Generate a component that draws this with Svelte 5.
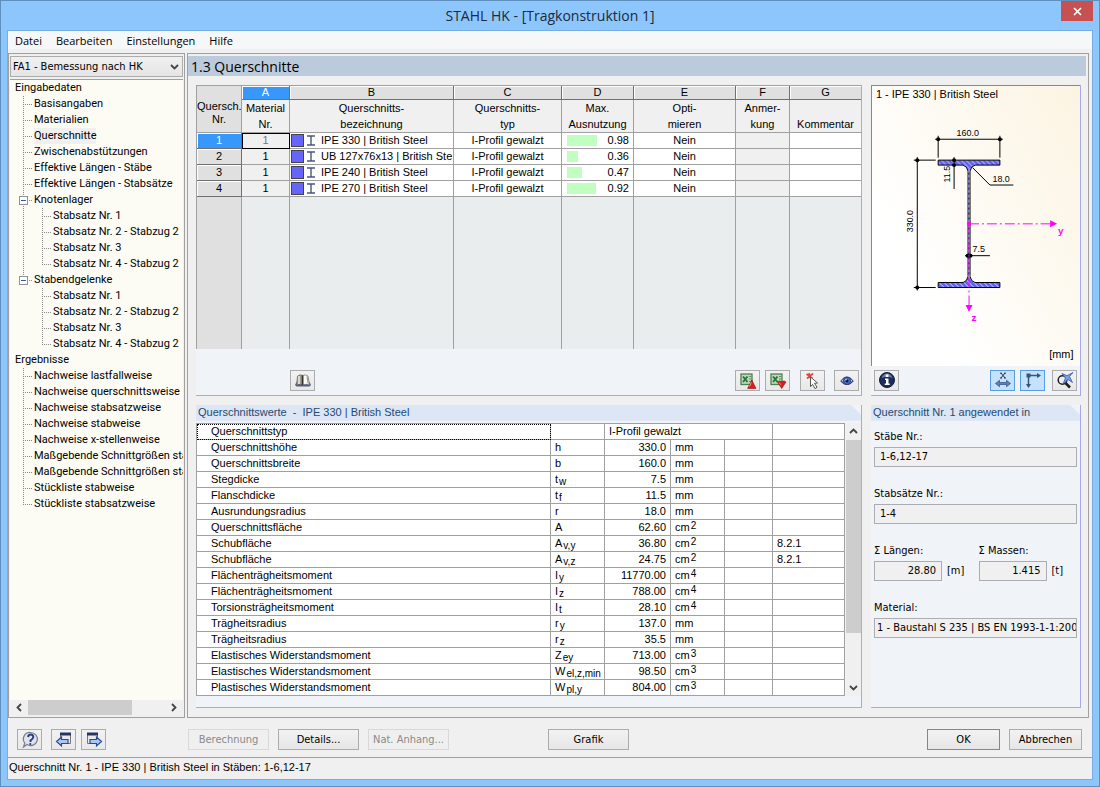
<script>
	let program = 'FA1 - Bemessung nach HK';

	const menu = ['Datei', 'Bearbeiten', 'Einstellungen', 'Hilfe'];

	const letters = ['A', 'B', 'C', 'D', 'E', 'F', 'G'];
	const names = [
		['Material', 'Nr.'],
		['Querschnitts-', 'bezeichnung'],
		['Querschnitts-', 'typ'],
		['Max.', 'Ausnutzung'],
		['Opti-', 'mieren'],
		['Anmer-', 'kung'],
		['', 'Kommentar']
	];

	const sections = [
		{ nr: 1, material: 1, name: 'IPE 330 | British Steel', ratio: 0.98 },
		{ nr: 2, material: 1, name: 'UB 127x76x13 | British Ste', ratio: 0.36 },
		{ nr: 3, material: 1, name: 'IPE 240 | British Steel', ratio: 0.47 },
		{ nr: 4, material: 1, name: 'IPE 270 | British Steel', ratio: 0.92 }
	];

	// guides: one entry per indent level left of the label
	const stabsatz = (guide) => [
		{ label: 'Stabsatz Nr. 1', guides: [guide, 'tee'] },
		{ label: 'Stabsatz Nr. 2 - Stabzug 2', guides: [guide, 'tee'] },
		{ label: 'Stabsatz Nr. 3', guides: [guide, 'tee'] },
		{ label: 'Stabsatz Nr. 4 - Stabzug 2', guides: [guide, 'end'] }
	];

	const tree = [
		{ label: 'Eingabedaten', guides: [] },
		{ label: 'Basisangaben', guides: ['tee'] },
		{ label: 'Materialien', guides: ['tee'] },
		{ label: 'Querschnitte', guides: ['tee'] },
		{ label: 'Zwischenabstützungen', guides: ['tee'] },
		{ label: 'Effektive Längen - Stäbe', guides: ['tee'] },
		{ label: 'Effektive Längen - Stabsätze', guides: ['tee'] },
		{ label: 'Knotenlager', guides: ['tee'], box: true },
		...stabsatz('line'),
		{ label: 'Stabendgelenke', guides: ['end'], box: true },
		...stabsatz('none'),
		{ label: 'Ergebnisse', guides: [] },
		{ label: 'Nachweise lastfallweise', guides: ['tee'] },
		{ label: 'Nachweise querschnittsweise', guides: ['tee'] },
		{ label: 'Nachweise stabsatzweise', guides: ['tee'] },
		{ label: 'Nachweise stabweise', guides: ['tee'] },
		{ label: 'Nachweise x-stellenweise', guides: ['tee'] },
		{ label: 'Maßgebende Schnittgrößen sta', guides: ['tee'] },
		{ label: 'Maßgebende Schnittgrößen sta', guides: ['tee'] },
		{ label: 'Stückliste stabweise', guides: ['tee'] },
		{ label: 'Stückliste stabsatzweise', guides: ['end'] }
	];

	let selected = 'Querschnitte';

	// label, symbol, subscript, value, unit, exponent, reference
	const values = [
		['Querschnittshöhe', 'h', '', '330.0', 'mm', '', ''],
		['Querschnittsbreite', 'b', '', '160.0', 'mm', '', ''],
		['Stegdicke', 't', 'w', '7.5', 'mm', '', ''],
		['Flanschdicke', 't', 'f', '11.5', 'mm', '', ''],
		['Ausrundungsradius', 'r', '', '18.0', 'mm', '', ''],
		['Querschnittsfläche', 'A', '', '62.60', 'cm', '2', ''],
		['Schubfläche', 'A', 'v,y', '36.80', 'cm', '2', '8.2.1'],
		['Schubfläche', 'A', 'v,z', '24.75', 'cm', '2', '8.2.1'],
		['Flächenträgheitsmoment', 'I', 'y', '11770.00', 'cm', '4', ''],
		['Flächenträgheitsmoment', 'I', 'z', '788.00', 'cm', '4', ''],
		['Torsionsträgheitsmoment', 'I', 't', '28.10', 'cm', '4', ''],
		['Trägheitsradius', 'r', 'y', '137.0', 'mm', '', ''],
		['Trägheitsradius', 'r', 'z', '35.5', 'mm', '', ''],
		['Elastisches Widerstandsmoment', 'Z', 'ey', '713.00', 'cm', '3', ''],
		['Elastisches Widerstandsmoment', 'W', 'el,z,min', '98.50', 'cm', '3', ''],
		['Plastisches Widerstandsmoment', 'W', 'pl,y', '804.00', 'cm', '3', '']
	];
</script>

<div class="window">
	<header class="titlebar">
		<h1>STAHL HK - [Tragkonstruktion 1]</h1>
		<button class="close" type="button" aria-label="Schließen">
			<svg width="9" height="9" viewBox="0 0 9 9"><path d="M1 1l7 7M8 1L1 8" stroke="#fff" stroke-width="1.7" /></svg>
		</button>
	</header>

	<div class="client">
		<nav class="menu">
			{#each menu as item}
				<button type="button">{item}</button>
			{/each}
		</nav>

		<div class="main">
			<aside class="pane sidebar">
				<div class="combo">
					<select aria-label="Bemessungsfall" bind:value={program}>
						<option>FA1 - Bemessung nach HK</option>
					</select>
					<svg width="9" height="6" viewBox="0 0 9 6"><path d="M1 1l3.500 3.500L8 1" fill="none" stroke="#444" stroke-width="1.800" /></svg>
				</div>
				<ul class="tree">
					{#each tree as node}
						<li>
							{#each node.guides as guide, i}
								<span class="guide {guide}">
									{#if node.box && i === node.guides.length - 1}
										<button class="toggle" type="button" aria-label="{node.label} zuklappen"></button>
									{/if}
								</span>
							{/each}
							<button
								class="node"
								class:selected={node.label === selected}
								type="button"
								on:click={() => (selected = node.label)}>{node.label}</button
							>
						</li>
					{/each}
				</ul>
				<div class="hscroll">
					<svg width="6" height="9" viewBox="0 0 6 9"><path d="M5 1L1.500 4.500L5 8" fill="none" stroke="#444" stroke-width="1.800" /></svg>
					<div class="track"><div class="thumb"></div></div>
					<svg width="6" height="9" viewBox="0 0 6 9"><path d="M1 1l3.500 3.500L1 8" fill="none" stroke="#444" stroke-width="1.800" /></svg>
				</div>
			</aside>

			<main class="pane content">
				<h2>1.3 Querschnitte</h2>

				<div class="panels">
					<section class="panel">
						<table class="grid">
							<colgroup>
								<col class="c-nr" /><col class="c-a" /><col class="c-b" /><col class="c-c" />
								<col class="c-d" /><col class="c-e" /><col class="c-f" /><col />
							</colgroup>
							<thead>
								<tr class="letters">
									<th class="corner" rowspan="2">Quersch.<br />Nr.</th>
									{#each letters as letter}
										<th class:active={letter === 'A'}>{letter}</th>
									{/each}
								</tr>
								<tr class="names">
									{#each names as name}
										<th>{name[0]}<br />{name[1]}</th>
									{/each}
								</tr>
							</thead>
							<tbody>
								{#each sections as row}
									<tr>
										<th class:active={row.nr === 1}>{row.nr}</th>
										<td class="gray" class:focus={row.nr === 1}>{row.material}</td>
										<td class="name">
											<div>
												<i class="swatch"></i>
												<svg width="8" height="11" viewBox="0 0 8 11"><path d="M0 1h8M0 10h8M4 1v9" stroke="#4a5585" stroke-width="1.400" /></svg>
												<span>{row.name}</span>
											</div>
										</td>
										<td>I-Profil gewalzt</td>
										<td class="ratio">
											<div>
												<span class="bar"><i style="width: {row.ratio * 100}%"></i></span>
												<span>{row.ratio.toFixed(2)}</span>
											</div>
										</td>
										<td>Nein</td>
										<td class="gray"></td>
										<td></td>
									</tr>
								{/each}
								<tr class="filler">
									<th></th>
									{#each letters as letter}
										<td></td>
									{/each}
								</tr>
							</tbody>
						</table>
						<div class="tools">
							<button class="icon library" type="button" aria-label="Bibliothek">
								<svg width="18" height="16" viewBox="0 0 18 16">
									<path d="M1 12l1.500-3h13l1.500 3-1.500 1.500h-13z" fill="#4f5d88" />
									<path d="M3.500 3Q6.500 1 9 2.500v9.500Q6 10.500 2.500 12z" fill="#a39d90" stroke="#666" stroke-width=".7" />
									<path d="M5 3v8" stroke="#efece4" stroke-width="1.500" />
									<path d="M9 2.500Q11.500 1 14 3l1.500 9Q12 10.500 9 12z" fill="#fbfaf5" stroke="#666" stroke-width=".7" />
									<path d="M13 3.500l1.200 7" stroke="#999" stroke-width="1.200" />
									<path d="M8.500 2.500v9.500" stroke="#333" stroke-width="1.600" />
								</svg>
							</button>
							<button class="icon" type="button" aria-label="Excel-Export">
								<svg width="18" height="18" viewBox="0 0 18 18">
									<rect x="2" y="2" width="11" height="10.500" fill="#bcd8b8" stroke="#4f7f55" stroke-width="1.300" />
									<path d="M10 4.500h2M10 7h2M10 9.500h2" stroke="#5f9467" />
									<path d="M4 4.500l4.500 5.500M8.500 4.500L4 10" stroke="#2b7439" stroke-width="1.900" />
									<path d="M12.800 8l4.200 8.500H8.600z" fill="#dc1c1c" stroke="#8f1010" stroke-width=".6" />
									<path d="M12.300 10.500l-1.800 4" stroke="#ff9a8a" />
								</svg>
							</button>
							<button class="icon" type="button" aria-label="Excel-Import">
								<svg width="18" height="18" viewBox="0 0 18 18">
									<rect x="2" y="2" width="11" height="10.500" fill="#bcd8b8" stroke="#4f7f55" stroke-width="1.300" />
									<path d="M10 4.500h2M10 7h2" stroke="#5f9467" />
									<path d="M4 4.500l4.500 5.500M8.500 4.500L4 10" stroke="#2b7439" stroke-width="1.900" />
									<path d="M8.500 10q2-2 4.200-.2q2.200-1.800 4.300.2l-4.300 6.500z" fill="#dc1c1c" stroke="#8f1010" stroke-width=".6" />
									<path d="M10.300 10.700l1.500 2" stroke="#ff9a8a" />
								</svg>
							</button>
							<button class="icon pick" type="button" aria-label="Auswählen">
								<svg width="18" height="18" viewBox="0 0 18 18">
									<path d="M2.500 2l6 4.500M9 1.500L3 6.500M5 1l1 5" stroke="#e04848" stroke-width="1.700" />
									<path d="M6.500 5l7 6-3 .3 2.600 4-2 1.300-2.500-4.200-2.100 2.300z" fill="#fff" stroke="#555" />
								</svg>
							</button>
							<button class="icon eye" type="button" aria-label="Ansicht">
								<svg width="18" height="16" viewBox="0 0 18 16">
									<path d="M3 8q6-8 12 0q-6 7-12 0z" fill="#dfe6f5" stroke="#3c4a78" stroke-width="1.200" />
									<circle cx="9" cy="7.800" r="3.600" fill="#4a72cc" stroke="#2c3f80" />
									<circle cx="9" cy="7.800" r="1.600" fill="#0d1430" />
									<circle cx="8" cy="6.800" r=".8" fill="#dfe8ff" />
								</svg>
							</button>
						</div>
					</section>

					<section class="panel">
						<svg class="preview" viewBox="0 0 209 281" role="img" aria-label="Querschnitt IPE 330">
							<defs>
								<pattern id="hatch" width="5" height="5" patternUnits="userSpaceOnUse">
									<rect width="5" height="5" fill="#5f5ff5" />
									<path d="M-1 -1l7 7M4 -1l2 2M-1 4l2 2" stroke="#d3d6ff" />
								</pattern>
							</defs>
							<text class="caption" x="4" y="12">1 - IPE 330 | British Steel</text>
							<text class="caption" x="178" y="273">[mm]</text>

							<path
								d="M66.500 74.500h62v5h-25q-4 1-5 6v106q1 5 5 6h25v5h-62v-5h25q4-1 5-6v-106q-1-5-5-6h-25z"
								fill="url(#hatch)"
								stroke="#000"
							/>
							<path d="M97.500 84v108" stroke="#ccc" stroke-dasharray="3 2" />

							<g fill="none" stroke="#000">
								<path d="M63.500 53.500h68M66.500 50v22M128.500 50v22" />
								<path d="M45.500 71.500v134M42 74.500h22M42 202.500h22" />
								<path d="M82.500 71.500v32" />
								<path d="M101 82l17.500 17.500h23.500" />
								<path d="M93.500 170.500h25" />
							</g>
							<g fill="#000">
								{#each [[66.5, 53.5], [128.5, 53.5], [45.5, 74.5], [45.5, 202.5], [82.5, 74.5], [82.5, 79.5], [96, 170.5], [99, 170.5]] as [x, y]}
									<circle cx={x} cy={y} r="2" />
								{/each}
							</g>
							<g class="dim">
								<text x="85" y="50">160.0</text>
								<text x="121" y="96">18.0</text>
								<text x="101" y="167">7.5</text>
								<text transform="translate(41 147) rotate(-90)">330.0</text>
								<text transform="translate(78 97) rotate(-90)">11.5</text>
							</g>

							<g stroke="#f0f" fill="none">
								<path d="M97.500 138.500h82" stroke-dasharray="10 3 2 3" />
								<path d="M97.500 138.500v84" stroke-dasharray="10 3 2 3" />
							</g>
							<g fill="#f0f">
								<circle cx="97.500" cy="138.500" r="2" />
								<path d="M179 135v7l7-3.500z" />
								<path d="M94 220h7l-3.500 7z" />
								<text class="axis" x="187" y="149">y</text>
								<text class="axis" x="100" y="236">z</text>
							</g>
						</svg>
						<div class="tools view">
							<button class="icon" type="button" aria-label="Info">
								<svg width="18" height="18" viewBox="0 0 18 18">
									<circle cx="9" cy="9" r="7.500" fill="#1d2c58" stroke="#101b3d" />
									<path d="M3.500 7q2-4.500 5.500-4.500t5.500 4.500q-5-2.500-11 0z" fill="#6f80ad" />
									<path d="M7.800 3.500h2.600v2.500H7.800zM7 7.500h3.500v5h1.200v1.500H6.700v-1.500H8V9H7z" fill="#fff" />
								</svg>
							</button>
							<button class="icon on dims" type="button" aria-label="Bemaßung">
								<svg width="18" height="18" viewBox="0 0 18 18">
									<path d="M7 2l4 5M11 2L7 7M6 2.200h2M10 2.200h2M6 7h2M10 7h2" stroke="#222" stroke-width=".9" />
									<path d="M1.500 12.500l4-3.200v2.200h7V9.300l4 3.200-4 3.200v-2.200h-7v2.200z" fill="#5f7dbb" stroke="#344a82" stroke-width=".7" />
								</svg>
							</button>
							<button class="icon on" type="button" aria-label="Achsen">
								<svg width="18" height="18" viewBox="0 0 18 18">
									<path d="M4.500 4.500h11M4.500 4.500v11" stroke="#3b5378" stroke-width="1.500" />
									<path d="M13 2l4 2.500-4 2.500zM2 13h5l-2.500 4z" fill="#3b5378" />
									<rect x="2.500" y="2.500" width="4" height="4" fill="#3b5378" />
								</svg>
							</button>
							<button class="icon zoom" type="button" aria-label="Gesamtansicht">
								<svg width="18" height="18" viewBox="0 0 18 18">
									<circle cx="6.500" cy="9" r="4.300" fill="#e9edf5" stroke="#222" stroke-width="1.500" />
									<path d="M9.500 12l4.500 4.500" stroke="#222" stroke-width="2.600" />
									<path d="M17 1.500l-3.500 4 3 6-4.500-3L7 13l2.500-6L6 2.500l5 2.200z" fill="#7d9fe0" stroke="#3558a8" stroke-width=".8" />
								</svg>
							</button>
						</div>
					</section>

					<section class="panel values">
						<h3>Querschnittswerte&nbsp; -&nbsp; IPE 330 | British Steel</h3>
						<div class="scrollarea">
							<table class="props">
								<colgroup>
									<col /><col class="p-sym" /><col class="p-val" /><col class="p-unit" />
									<col class="p-gap" /><col class="p-ref" />
								</colgroup>
								<tbody>
									<tr>
										<td class="label current">Querschnittstyp</td>
										<td></td>
										<td colspan="3">I-Profil gewalzt</td>
										<td></td>
									</tr>
									{#each values as [label, sym, sub, value, unit, exp, ref]}
										<tr>
											<td class="label">{label}</td>
											<td>{sym}{#if sub}<sub>{sub}</sub>{/if}</td>
											<td class="num">{value}</td>
											<td>{unit}{#if exp}<sup>{exp}</sup>{/if}</td>
											<td></td>
											<td>{ref}</td>
										</tr>
									{/each}
								</tbody>
							</table>
							<div class="vscroll">
								<svg width="9" height="6" viewBox="0 0 9 6"><path d="M1 5l3.500-3.500L8 5" fill="none" stroke="#444" stroke-width="1.800" /></svg>
								<div class="track"><div class="thumb"></div></div>
								<svg width="9" height="6" viewBox="0 0 9 6"><path d="M1 1l3.500 3.500L8 1" fill="none" stroke="#444" stroke-width="1.800" /></svg>
							</div>
						</div>
					</section>

					<section class="panel usage">
						<h3>Querschnitt Nr. 1 angewendet in</h3>
						<div class="fields">
							<div class="field">
								<label for="staebe">Stäbe Nr.:</label>
								<input id="staebe" readonly value="1-6,12-17" />
							</div>
							<div class="field">
								<label for="saetze">Stabsätze Nr.:</label>
								<input id="saetze" readonly value="1-4" />
							</div>
							<div class="pair">
								<div class="field">
									<label for="laengen">Σ Längen:</label>
									<div class="unit"><input id="laengen" readonly value="28.80" /><span>[m]</span></div>
								</div>
								<div class="field">
									<label for="massen">Σ Massen:</label>
									<div class="unit"><input id="massen" readonly value="1.415" /><span>[t]</span></div>
								</div>
							</div>
							<div class="field">
								<label for="material">Material:</label>
								<input id="material" class="long" readonly value="1 - Baustahl S 235 | BS EN 1993-1-1:200" />
							</div>
						</div>
					</section>
				</div>
			</main>
		</div>

		<footer class="actions">
			<div class="nav">
				<button class="icon" type="button" aria-label="Hilfe">
					<svg width="18" height="18" viewBox="0 0 18 18">
						<path d="M9.500 1.500a6.800 6.500 0 1 1-3.500 12L2.500 16l1.300-4A6.500 6.500 0 0 1 9.500 1.500z" fill="#dfe3ec" stroke="#7b7f8c" stroke-width="1.200" />
						<path d="M7 6q.5-2.500 2.800-2.500T12.300 6q0 1.500-2.800 3.500V11" fill="none" stroke="#283f85" stroke-width="1.900" />
						<circle cx="9.300" cy="13" r="1.100" fill="#283f85" />
					</svg>
				</button>
				<button class="icon back" type="button" aria-label="Zurück">
					<svg width="18" height="18" viewBox="0 0 18 18">
						<path d="M5.500 2.500h10v10h-10z" fill="#e9e9ec" stroke="#777" />
						<path d="M5 1.500h11v3H5z" fill="#283563" />
						<path d="M1.500 10.500l5-4.500v2.500H13v4H6.500V15z" fill="#a9c6f5" stroke="#2a4a94" stroke-width="1.200" />
					</svg>
				</button>
				<button class="icon" type="button" aria-label="Weiter">
					<svg width="18" height="18" viewBox="0 0 18 18">
						<path d="M2.500 2.500h10v10h-10z" fill="#e9e9ec" stroke="#777" />
						<path d="M2 1.500h11v3H2z" fill="#283563" />
						<path d="M16.500 10.500l-5-4.500v2.500H5v4h6.500V15z" fill="#a9c6f5" stroke="#2a4a94" stroke-width="1.200" />
					</svg>
				</button>
			</div>
			<button class="push" type="button" disabled>Berechnung</button>
			<button class="push" type="button">Details...</button>
			<button class="push" type="button" disabled>Nat. Anhang...</button>
			<button class="push graphic" type="button">Grafik</button>
			<div class="confirm">
				<button class="push default" type="button">OK</button>
				<button class="push" type="button">Abbrechen</button>
			</div>
		</footer>

		<div class="status">Querschnitt Nr. 1 - IPE 330 | British Steel in Stäben: 1-6,12-17</div>
	</div>
</div>

<style>
	:global(body) {
		margin: 0;
	}

	.window {
		--ui: 'DejaVu Sans Condensed', 'Noto Sans', sans-serif;
		--tree: Roboto, 'Noto Sans', sans-serif;
		--text: 'Liberation Sans', Arial, sans-serif;
		--title: 'Open Sans', 'Noto Sans', sans-serif;
		--line: #a0a0a0;
		--lilac: #a8a8e8;
		box-sizing: border-box;
		display: flex;
		flex-direction: column;
		min-height: 100vh;
		padding: 0 6px 6px;
		border: 1px solid #5f8fbd;
		background: #8cc6fc;
		color: #000;
		font: 11px/16px var(--ui);
	}

	.window :global(*) {
		box-sizing: border-box;
	}

	button,
	input,
	select {
		margin: 0;
		color: inherit;
		font: inherit;
	}

	svg {
		display: block;
		flex-shrink: 0;
	}

	h1,
	h2,
	h3 {
		margin: 0;
		font-weight: 400;
	}

	.titlebar {
		display: grid;
		grid-template-columns: 32px 1fr 32px;
		height: 29px;
	}

	h1 {
		grid-column: 2;
		color: #1c2a3a;
		font: 14px/29px var(--title);
		text-align: center;
	}

	.close {
		display: flex;
		align-items: center;
		justify-content: center;
		height: 20px;
		padding: 0;
		border: 0;
		background: #c75050;
	}

	.client {
		display: flex;
		flex: 1;
		flex-direction: column;
		border: 1px solid #75aee3;
		background: #f0f0f0;
	}

	.menu {
		display: flex;
		gap: 14px;
		height: 22px;
		padding: 0 7px;
		background: linear-gradient(#f6f7f9 18px, #f0f0f0 18px);
	}

	.menu button {
		padding: 0 0 2px;
		border: 0;
		background: none;
		font: 11px/20px var(--title);
	}

	.main {
		display: flex;
		flex: 1;
		gap: 2px;
		padding-right: 3px;
	}

	.pane {
		border: 1px solid var(--line);
	}

	.sidebar {
		display: flex;
		flex-direction: column;
		width: 177px;
		padding: 2px 1px;
		overflow: hidden;
	}

	.combo {
		display: grid;
		align-items: center;
	}

	.combo select {
		grid-area: 1 / 1;
		width: 100%;
		height: 21px;
		padding: 0 2px;
		border: 1px solid #acacac;
		border-radius: 0;
		background: linear-gradient(#f0f0f0, #e5e5e5);
		appearance: none;
	}

	.combo svg {
		grid-area: 1 / 1;
		justify-self: end;
		margin-right: 4px;
		pointer-events: none;
	}

	.tree {
		flex: 1;
		margin: 2px 0 0;
		padding: 0 0 0 5px;
		overflow: hidden;
		border-top: 1px solid var(--line);
		background: #fcfcf4;
		font-family: var(--tree);
		list-style: none;
	}

	.tree li {
		display: flex;
		height: 16px;
	}

	.guide {
		--v: repeating-linear-gradient(#888 0 1px, transparent 1px 2px);
		--h: repeating-linear-gradient(90deg, #888 0 1px, transparent 1px 2px);
		display: flex;
		flex: 0 0 19px;
		align-items: center;
		padding-left: 4px;
		background-repeat: no-repeat;
	}

	.line {
		background-image: var(--v);
		background-position: 8px 0;
		background-size: 1px 16px;
	}

	.tee {
		background-image: var(--v), var(--h);
		background-position: 8px 0, 8px 8px;
		background-size: 1px 16px, 9px 1px;
	}

	.end {
		background-image: var(--v), var(--h);
		background-position: 8px 0, 8px 8px;
		background-size: 1px 8px, 9px 1px;
	}

	.toggle {
		width: 9px;
		height: 9px;
		padding: 0;
		border: 1px solid #919191;
		background: linear-gradient(#3b58a8, #3b58a8) center / 5px 1px no-repeat #fff;
	}

	.node {
		padding: 0;
		border: 0;
		background: none;
		line-height: 16px;
		white-space: nowrap;
	}

	.selected {
		background: #f0f0f0;
	}

	.hscroll {
		display: flex;
		align-items: center;
		gap: 6px;
		height: 15px;
		padding: 0 6px;
		background: #f0f0f0;
	}

	.hscroll .track {
		display: flex;
		flex: 1;
		height: 100%;
	}

	.hscroll .thumb {
		width: 76%;
		background: #cdcdcd;
	}

	.content {
		display: flex;
		flex: 1;
		flex-direction: column;
		min-width: 0;
		padding: 2px 2px 9px 0;
	}

	h2 {
		height: 20px;
		padding-left: 3px;
		background: #bccbdb;
		font: 14px/22px var(--title);
	}

	.panels {
		display: grid;
		flex: 1;
		grid-template-rows: auto 1fr;
		grid-template-columns: 1fr 210px;
		gap: 9px;
		padding: 9px 5px 0 8px;
	}

	.panel {
		display: flex;
		flex-direction: column;
		min-width: 0;
		border: solid var(--lilac);
		border-width: 0 1px 1px 0;
		background: #f0f4f9;
	}

	table {
		width: 100%;
		border-spacing: 0;
		table-layout: fixed;
		font: 11px/15px var(--text);
	}

	th,
	td {
		padding: 0;
		overflow: hidden;
		border: solid var(--line);
		border-width: 0 1px 1px 0;
		font-weight: 400;
		white-space: nowrap;
	}

	.grid {
		border: solid var(--line);
		border-width: 1px 0 0 1px;
		text-align: center;
	}

	.grid tr > :last-child {
		border-right: 0;
	}

	.grid .c-nr {
		width: 45px;
	}
	.grid .c-a {
		width: 48px;
	}
	.grid .c-b {
		width: 164px;
	}
	.grid .c-c {
		width: 108px;
	}
	.grid .c-d {
		width: 72px;
	}
	.grid .c-e {
		width: 102px;
	}
	.grid .c-f {
		width: 54px;
	}

	.letters th,
	tbody th {
		border-color: #707070;
		background: #e0e0e0;
		box-shadow: inset 1px 1px #fff;
	}

	.letters th {
		height: 14px;
		line-height: 13px;
	}

	.letters .corner {
		padding-top: 8px;
		border-color: var(--line);
		box-shadow: none;
	}

	.grid .active {
		background: #3797fb;
		color: #fff;
	}

	.names th {
		height: 33px;
		background: #f0f0f0;
		line-height: 16px;
	}

	.grid tbody td,
	.grid tbody th {
		height: 16px;
	}

	.grid tbody td {
		background: #fff;
	}

	.grid tbody .gray {
		background: #f0f0f0;
	}

	.grid tbody .focus {
		outline: 1px solid #000;
		outline-offset: -1px;
		color: #777;
	}

	.name div,
	.ratio div {
		display: flex;
		align-items: center;
	}

	.name div {
		padding-left: 1px;
	}

	.swatch {
		width: 13px;
		height: 13px;
		margin-right: 3px;
		border: 1px solid #444;
		background: #6666ff;
	}

	.name svg {
		margin-right: 6px;
	}

	.ratio div {
		justify-content: space-between;
		padding: 0 4px 0 5px;
	}

	.bar {
		width: 31px;
		height: 11px;
	}

	.bar i {
		display: block;
		height: 100%;
		background: #c0ffc0;
	}

	.grid .filler th,
	.grid .filler td {
		height: 152px;
		border-bottom: 0;
	}

	.grid .filler th {
		border-color: var(--line);
		box-shadow: none;
	}

	.grid .filler td {
		background: #e9eded;
	}

	.tools {
		display: flex;
		gap: 5px;
		padding: 21px 2px 3px;
	}

	.icon {
		display: flex;
		align-items: center;
		justify-content: center;
		width: 25px;
		height: 21px;
		padding: 0;
		border: 1px solid #acacac;
		background: linear-gradient(#f2f2f2, #e8e8e8);
	}

	.on {
		border-color: #569de5;
		background: #c5e2fb;
	}

	.library {
		margin: 0 auto 0 92px;
	}

	.pick {
		margin: 0 4px 0 5px;
	}

	.preview {
		width: 100%;
		border: solid #888;
		border-width: 1px 0 0 1px;
		background: linear-gradient(60deg, #fff 25%, #fcf4e2);
		font-family: var(--text);
	}

	.caption {
		font-size: 11px;
	}

	.dim {
		font-size: 9px;
	}

	.axis {
		font-size: 10px;
		font-weight: 700;
	}

	.view {
		padding: 4px 3px;
		margin-top: auto;
	}

	.dims {
		margin-left: auto;
	}

	.zoom {
		margin-left: 2px;
	}

	h3 {
		height: 16px;
		padding-left: 2px;
		background: #dce6f4;
		clip-path: polygon(0 0, calc(100% - 10px) 0, 100% 10px, 100% 100%, 0 100%);
		color: #1f4a72;
		font: 11px/15px var(--text);
	}

	.scrollarea {
		display: flex;
		gap: 1px;
		margin-top: 2px;
	}

	.props {
		flex: 1;
		border: solid var(--line);
		border-width: 1px 0 0 1px;
	}

	.props td {
		height: 16px;
		padding: 0 4px;
		background: #fff;
	}

	.props .p-sym {
		width: 54px;
	}
	.props .p-val {
		width: 66px;
	}
	.props .p-unit {
		width: 54px;
	}
	.props .p-gap {
		width: 48px;
	}
	.props .p-ref {
		width: 72px;
	}

	.props .label {
		padding-left: 14px;
	}

	.props .current {
		outline: 1px dotted #000;
		outline-offset: -1px;
	}

	.props .num {
		text-align: right;
	}

	sub,
	sup {
		margin-left: 1px;
		font-size: 10px;
		line-height: 0;
	}

	sub {
		vertical-align: -2px;
	}

	sup {
		vertical-align: 2px;
	}

	.vscroll {
		display: flex;
		flex-direction: column;
		align-items: center;
		width: 15px;
		padding: 5px 0;
		background: #f0f0f0;
	}

	.vscroll .track {
		flex: 1;
		width: 100%;
		padding: 6px 0;
	}

	.vscroll .thumb {
		height: 81%;
		background: #cdcdcd;
	}

	.fields {
		display: flex;
		flex-direction: column;
		gap: 19px;
		padding: 8px 3px;
	}

	.field {
		display: flex;
		flex-direction: column;
		gap: 2px;
		min-width: 0;
	}

	.field input {
		width: 100%;
		height: 20px;
		padding: 0 5px;
		border: 1px solid #abadb3;
		background: #f0f0f0;
	}

	.field .long {
		padding: 0 0 0 2px;
	}

	.pair {
		display: grid;
		grid-template-columns: 1fr 1fr;
		gap: 6px;
	}

	.unit {
		display: flex;
		align-items: center;
		gap: 5px;
	}

	.unit input {
		width: 68px;
		text-align: right;
	}

	.actions {
		display: flex;
		align-items: center;
		gap: 9px;
		height: 39px;
		padding: 4px 10px 0 9px;
	}

	.nav {
		display: flex;
		gap: 5px;
		width: 162px;
	}

	.back {
		margin-left: 4px;
	}

	.push {
		width: 81px;
		height: 21px;
		padding: 0;
		border: 1px solid #acacac;
		background: linear-gradient(#f2f2f2, #e6e6e6);
		white-space: nowrap;
	}

	.push:disabled {
		border-color: #d9d9d9;
		background: #efefef;
		color: #8a8a8a;
	}

	.graphic {
		margin-left: 90px;
	}

	.confirm {
		display: flex;
		gap: 9px;
		margin-left: auto;
	}

	.confirm .push {
		width: 73px;
	}

	.confirm .default {
		border-color: #3399ff;
	}

	.status {
		height: 22px;
		padding: 1px;
		border-top: 1px solid var(--line);
		font: 11px/16px var(--text);
	}
</style>
